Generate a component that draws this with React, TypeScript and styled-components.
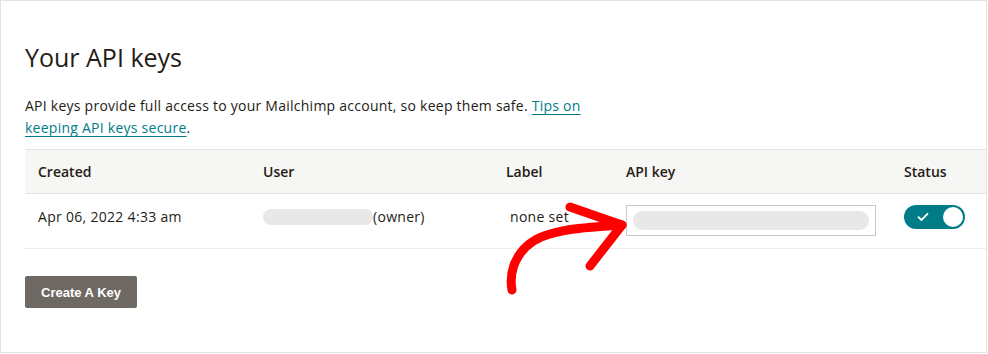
import React from "react";
import styled, { createGlobalStyle } from "styled-components";

const GlobalStyle = createGlobalStyle`
  html, body {
    margin: 0;
    padding: 0;
    background: #fff;
  }
  body {
    font-family: "Open Sans", "Liberation Sans", sans-serif;
    color: #241c15;
  }
`;

type Row = {
  created: string;
  userWidth: number;
  role: string;
  label: string;
};

const rows: Row[] = [
  { created: "Apr 06, 2022 4:33 am", userWidth: 110, role: "(owner)", label: "none set" },
];

function App() {
  return (
    <>
      <GlobalStyle />
      <Page>
        <Title>Your API keys</Title>
        <Intro>
          API keys provide full access to your Mailchimp account, so keep them safe.{" "}
          <Link href="#">Tips on keeping API keys secure</Link>.
        </Intro>
        <Table>
          <HeadRow>
            <HeadCell>Created</HeadCell>
            <HeadCell>User</HeadCell>
            <HeadCell>Label</HeadCell>
            <HeadCell>API key</HeadCell>
            <HeadCell>Status</HeadCell>
          </HeadRow>
          {rows.map((r) => (
            <BodyRow key={r.created}>
              <Cell>{r.created}</Cell>
              <Cell>
                <Redacted style={{ width: r.userWidth }} />
                <span>{r.role}</span>
              </Cell>
              <Cell $indent={4}>{r.label}</Cell>
              <Cell>
                <KeyField>
                  <KeyRedacted />
                </KeyField>
              </Cell>
              <Cell>
                <Toggle>
                  <svg width="12" height="10" viewBox="0 0 12 10">
                    <path d="M1.5 5.2 L4.4 8 L10.5 1.8" fill="none" stroke="#fff" strokeWidth="1.8" strokeLinecap="round" strokeLinejoin="round" />
                  </svg>
                  <Knob />
                </Toggle>
              </Cell>
            </BodyRow>
          ))}
        </Table>
        <Actions>
          <CreateButton>Create A Key</CreateButton>
        </Actions>
        <Arrow width="140" height="100" viewBox="0 0 140 100">
          <path
            d="M22 93 C 18 70, 30 45, 60 37 C 80 31, 105 30, 132 28"
            fill="none"
            stroke="#f00"
            strokeWidth="9"
            strokeLinecap="round"
          />
          <path
            d="M80 10 L 132 28 L 100 69"
            fill="none"
            stroke="#f00"
            strokeWidth="9"
            strokeLinecap="round"
            strokeLinejoin="round"
          />
        </Arrow>
      </Page>
    </>
  );
}

export default App;

const Page = styled.div`
  position: relative;
  box-sizing: border-box;
  width: 987px;
  height: 353px;
  border: 1px solid #e3e3e3;
  padding: 34px 0 0 24px;
`;

const Title = styled.h1`
  margin: 0;
  font-size: 25px;
  line-height: 44px;
  font-weight: 400;
  color: #241c15;
`;

const Intro = styled.p`
  margin: 16px 0 0;
  width: 590px;
  font-size: 14px;
  line-height: 22px;
  letter-spacing: 0.25px;
  color: #241c15;
`;

const Link = styled.a`
  color: #007c89;
  text-decoration: underline;
  text-underline-offset: 3px;
`;

const Table = styled.div`
  margin-top: 10px;
  border-top: 1px solid #e2e2e2;
`;

const grid = `
  display: grid;
  grid-template-columns: 225px 243px 120px 278px 1fr;
`;

const HeadRow = styled.div`
  ${grid};
  align-items: center;
  height: 43px;
  background: #f6f6f4;
  border-bottom: 1px solid #e2e2e2;
`;

const HeadCell = styled.div`
  padding-left: 13px;
  font-size: 14px;
  font-weight: 600;
  color: #241c15;
`;

const BodyRow = styled.div`
  ${grid};
  align-items: start;
  box-sizing: border-box;
  height: 55px;
  padding-top: 11px;
  border-bottom: 1px dotted #dcdcdc;
`;

const Cell = styled.div<{ $indent?: number }>`
  display: flex;
  align-items: center;
  min-height: 24px;
  padding-left: ${(p) => 13 + (p.$indent || 0)}px;
  font-size: 14px;
  line-height: 24px;
  letter-spacing: 0.3px;
  color: #241c15;
`;

const Redacted = styled.div`
  height: 16px;
  border-radius: 8px;
  background: #e8e8e8;
`;

const KeyField = styled.div`
  box-sizing: border-box;
  width: 250px;
  height: 31px;
  border: 1px solid #c8c8c8;
  padding: 5px 6px;
  display: flex;
  align-items: center;
`;

const KeyRedacted = styled.div`
  width: 238px;
  height: 19px;
  border-radius: 10px;
  background: #e8e8e8;
`;

const Toggle = styled.div`
  box-sizing: border-box;
  width: 61px;
  height: 24px;
  border-radius: 12px;
  background: #007c89;
  display: flex;
  align-items: center;
  justify-content: space-between;
  padding: 0 2px 0 13px;
`;

const Knob = styled.div`
  width: 20px;
  height: 20px;
  border-radius: 50%;
  background: #fff;
`;

const Actions = styled.div`
  margin-top: 27px;
`;

const CreateButton = styled.button`
  width: 112px;
  height: 32px;
  border: none;
  border-radius: 2px;
  background: #6f6963;
  color: #fff;
  font-family: "Liberation Sans", Arial, sans-serif;
  font-size: 13px;
  font-weight: 700;
  cursor: pointer;
`;

const Arrow = styled.svg`
  position: absolute;
  left: 489px;
  top: 196px;
`;
